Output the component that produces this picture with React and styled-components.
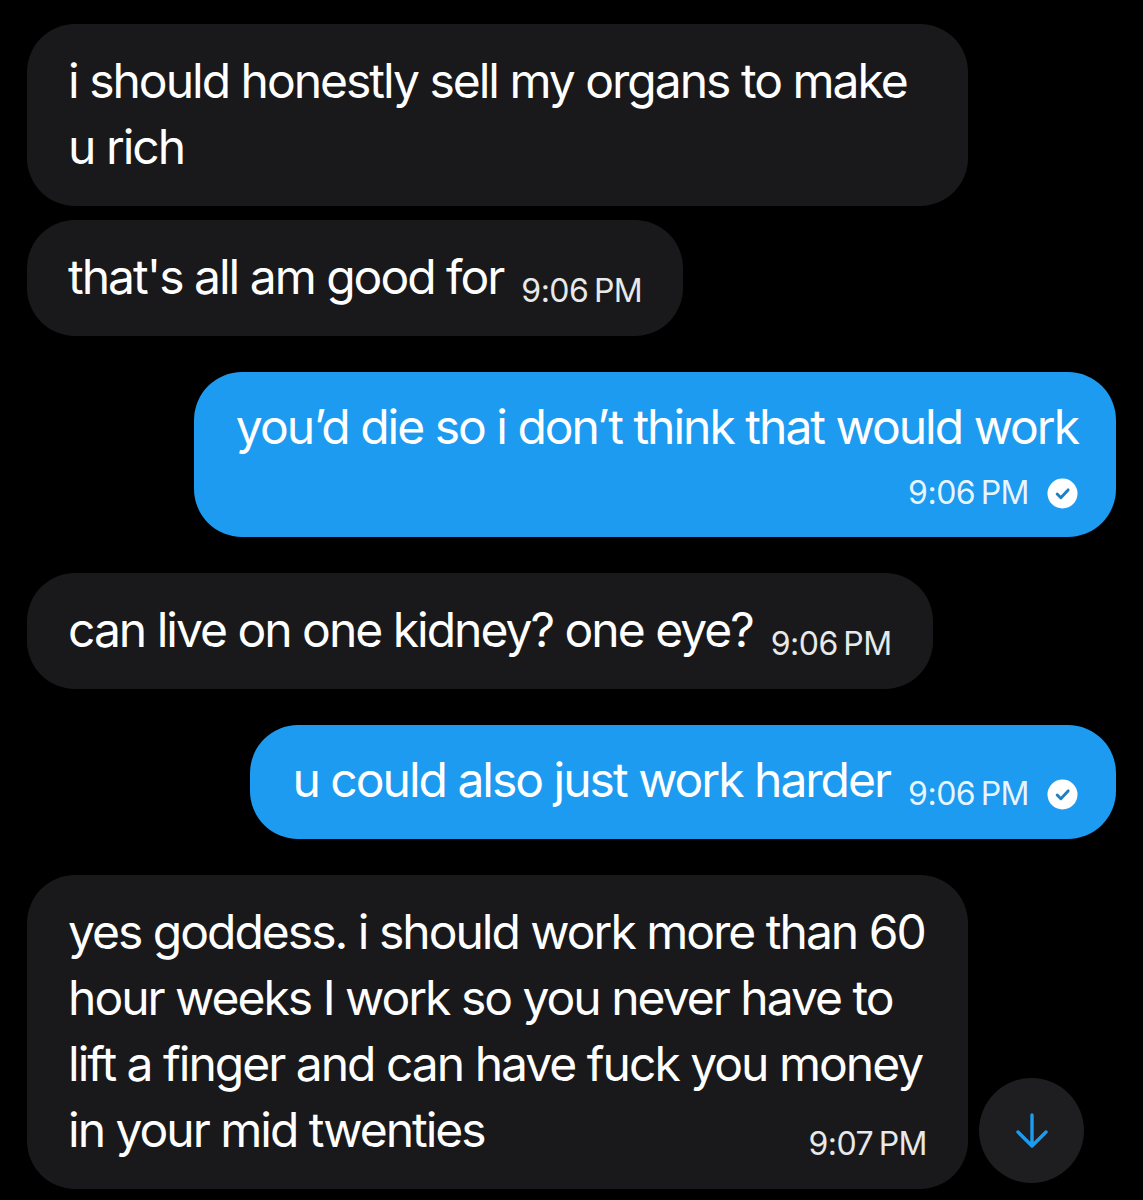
import styled, { createGlobalStyle } from "styled-components";

const GlobalStyle = createGlobalStyle`
  html, body {
    margin: 0;
    padding: 0;
    background: #000;
  }
  body {
    font-family: Inter, "Noto Sans", "Liberation Sans", sans-serif;
    color: #fff;
    -webkit-font-smoothing: antialiased;
  }
`;

const Page = styled.div`
  position: relative;
  width: 1143px;
  height: 1200px;
  overflow: hidden;
  box-sizing: border-box;
  padding: 24px 27px;
  background: #000;
`;

const Thread = styled.div`
  display: flex;
  flex-direction: column;
  gap: 36px;
`;

const Group = styled.div`
  display: flex;
  flex-direction: column;
  gap: 14px;
  align-items: ${(p) => (p.$mine ? "flex-end" : "flex-start")};
`;

const Bubble = styled.div`
  box-sizing: border-box;
  max-width: 941px;
  padding: ${(p) => (p.$mine ? "22px 38px 26px 42px" : "24px 41px 26px 41px")};
  border-radius: 48px;
  background: ${(p) => (p.$mine ? "#1d9bf0" : "#19191b")};
  color: #fff;
  font-size: 48px;
  line-height: 66px;
  letter-spacing: -2px;
  display: flow-root;
`;

const Stamp = styled.span`
  float: ${(p) => (p.$inline ? "right" : "none")};
  display: inline-flex;
  align-items: center;
  gap: 18px;
  margin: ${(p) => (p.$inline ? "29px 0 0 18px" : "0")};
  font-size: 32px;
  line-height: 36px;
  letter-spacing: -0.5px;
  word-spacing: -3px;
  color: ${(p) => (p.$mine ? "rgba(255,255,255,0.92)" : "#e7e9ea")};
  white-space: nowrap;
`;

const Footer = styled.div`
  display: flex;
  justify-content: flex-end;
  margin-top: 15px;
`;

const ScrollButton = styled.button`
  position: absolute;
  left: 979px;
  top: 1078px;
  width: 105px;
  height: 105px;
  border: none;
  border-radius: 50%;
  background: #1e1e20;
  display: flex;
  align-items: center;
  justify-content: center;
  padding: 0;
  cursor: pointer;
`;

const Seen = () => (
  <svg width="31" height="31" viewBox="0 0 32 32">
    <circle cx="16" cy="16" r="15.5" fill="#fff" />
    <path
      d="M10.5 16.5l3.8 3.8 7.5-8"
      fill="none"
      stroke="#1d7fc4"
      strokeWidth="3"
      strokeLinecap="round"
      strokeLinejoin="round"
    />
  </svg>
);

const ArrowDown = () => (
  <svg width="34" height="38" viewBox="0 0 34 38">
    <path
      d="M17 3v31M3 20l14 14 14-14"
      fill="none"
      stroke="#1d9bf0"
      strokeWidth="3.4"
      strokeLinecap="round"
      strokeLinejoin="round"
    />
  </svg>
);

const Time = ({ mine, inline, children }) => (
  <Stamp $mine={mine} $inline={inline}>
    <span>{children}</span>
    {mine && <Seen />}
  </Stamp>
);

const App = () => {
  return (
    <>
      <GlobalStyle />
      <Page>
        <Thread>
          <Group>
            <Bubble>i should honestly sell my organs to make u rich</Bubble>
            <Bubble>
              that's all am good for
              <Time inline>9:06 PM</Time>
            </Bubble>
          </Group>
          <Group $mine>
            <Bubble $mine>
              you’d die so i don’t think that would work
              <Footer>
                <Time mine>9:06 PM</Time>
              </Footer>
            </Bubble>
          </Group>
          <Group>
            <Bubble>
              can live on one kidney? one eye?
              <Time inline>9:06 PM</Time>
            </Bubble>
          </Group>
          <Group $mine>
            <Bubble $mine>
              u could also just work harder
              <Time mine inline>9:06 PM</Time>
            </Bubble>
          </Group>
          <Group>
            <Bubble>
              yes goddess. i should work more than 60 hour weeks I work so you
              never have to lift a finger and can have fuck you money in your
              mid twenties
              <Time inline>9:07 PM</Time>
            </Bubble>
          </Group>
        </Thread>
        <ScrollButton aria-label="Scroll to bottom">
          <ArrowDown />
        </ScrollButton>
      </Page>
    </>
  );
};

export default App;
